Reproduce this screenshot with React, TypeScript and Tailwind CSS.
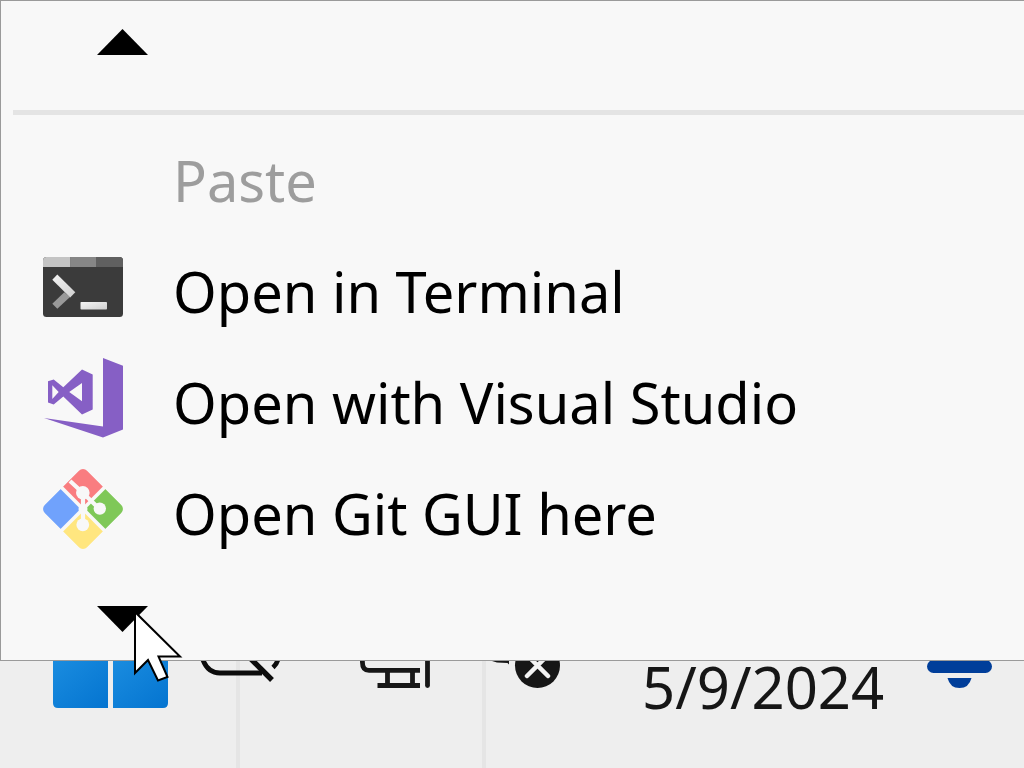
import React from "react";

interface MenuItem {
  label: string;
  icon?: React.ReactNode;
  disabled?: boolean;
}

const TerminalIcon = () => (
  <svg className="w-20 h-[60px]" viewBox="0 0 80 60" aria-hidden="true">
    <defs>
      <clipPath id="terminal-shape">
        <rect width="80" height="60" rx="3.5" />
      </clipPath>
      <linearGradient id="terminal-prompt" x1="0" y1="0" x2="1" y2="1">
        <stop offset="0" stopColor="#f4f4f4" />
        <stop offset="1" stopColor="#cfcfcf" />
      </linearGradient>
    </defs>
    <g clipPath="url(#terminal-shape)">
      <rect width="80" height="60" fill="#3b3b3b" />
      <rect width="27.5" height="10" fill="#c4c4c4" />
      <rect x="27.5" width="26" height="10" fill="#868686" />
      <rect x="53.5" width="26.5" height="10" fill="#606060" />
    </g>
    <path d="M21.3 35.3 27 40 14.3 51.7 9.3 46.7Z" fill="#999" />
    <path
      d="M9.3 22.8 14.3 17.6 32.3 35.2 27.2 40.4Z"
      fill="url(#terminal-prompt)"
    />
    <rect
      x="37.5"
      y="45"
      width="26.5"
      height="7.5"
      rx="0.8"
      fill="url(#terminal-prompt)"
    />
  </svg>
);

const VisualStudioIcon = () => (
  <svg className="w-20 h-20" viewBox="0 0 80 80" fill="#865fc5" aria-hidden="true">
    <path d="M60 0 80 7.8V71.4L60 79.6 1 60 60 68.4Z" />
    <path
      fillRule="evenodd"
      d="M5 23.2 10.7 21.6 20.3 29.2 39 11.6 49.7 16.4V51.6L39 56.4 20.3 38.6 10.7 46.4 5 44.4ZM9.3 27.3V41L15.7 34.1ZM39 25 26.2 34.1 39 43.2Z"
    />
  </svg>
);

const GitIcon = () => (
  <svg className="w-20 h-20" viewBox="0 0 80 80" aria-hidden="true">
    <defs>
      <clipPath id="git-shape">
        <rect x="10" y="10" width="60" height="60" rx="6" transform="rotate(45 40 40)" />
      </clipPath>
    </defs>
    <g clipPath="url(#git-shape)">
      <g transform="rotate(45 40 40)">
        <rect x="10" y="10" width="28.2" height="28.2" fill="#f97d80" />
        <rect x="41.8" y="10" width="28.2" height="28.2" fill="#7fc858" />
        <rect x="10" y="41.8" width="28.2" height="28.2" fill="#70a2fc" />
        <rect x="41.8" y="41.8" width="28.2" height="28.2" fill="#ffe67f" />
      </g>
    </g>
    <g stroke="#f8f8f8" strokeWidth="4.2" fill="none">
      <path d="M27 12 40 24 56 39.5" />
      <path d="M40 23V56" />
    </g>
    <g fill="#f8f8f8">
      <circle cx="39.8" cy="23.8" r="6.8" />
      <circle cx="56.8" cy="39.6" r="6.2" />
      <circle cx="39.8" cy="55.8" r="6.4" />
      <circle cx="40" cy="40" r="4.5" />
    </g>
  </svg>
);

const items: MenuItem[] = [
  { label: "Paste", disabled: true },
  { label: "Open in Terminal", icon: <TerminalIcon /> },
  { label: "Open with Visual Studio", icon: <VisualStudioIcon /> },
  { label: "Open Git GUI here", icon: <GitIcon /> },
];

const ContextMenu = () => (
  <div
    role="menu"
    className="relative shrink-0 border-t border-l border-b border-[#9a9a9a] bg-[#f8f8f8]"
  >
    <button type="button" aria-label="Scroll up" className="block w-full pt-7 pb-[54px] pl-24">
      <svg className="block w-[51px] h-[27px]" viewBox="0 0 51 27">
        <path d="M25.5 0 51 26H0Z" />
      </svg>
    </button>
    <div role="separator" className="ml-3 h-[5px] bg-[#e4e4e4]" />

    <div className="pt-[5px]">
      {items.map((item) => (
        <button
          key={item.label}
          type="button"
          role="menuitem"
          disabled={item.disabled}
          className="flex w-full h-[111px] items-center gap-[50px] pl-[42px] text-left text-[56px] leading-none text-black disabled:text-[#9d9d9d]"
        >
          <span className="flex w-20 shrink-0 justify-center">{item.icon}</span>
          <span className="pt-2 whitespace-nowrap">{item.label}</span>
        </button>
      ))}
    </div>

    <button type="button" aria-label="Scroll down" className="block w-full pt-[42px] pb-7 pl-24">
      <svg className="block w-[51px] h-[26px]" viewBox="0 0 51 26">
        <path d="M0 0H51L25.5 26Z" />
      </svg>
    </button>

    <svg
      className="pointer-events-none absolute left-[131px] top-[607px] z-10 w-[54px] h-[76px]"
      viewBox="0 0 54 76"
      aria-hidden="true"
    >
      <path
        d="M3 4V65L16 52 26 72.5 35.5 69 26.5 48.5H48Z"
        fill="#fff"
        stroke="#000"
        strokeWidth="2"
      />
    </svg>
  </div>
);

const Taskbar = () => (
  <div className="relative flex-1 bg-[#eeeeee]">
    <div className="absolute inset-0 flex">
      <div className="w-60 border-r-4 border-[#e5e5e5]" />
      <div className="w-[246px] border-r-4 border-[#e5e5e5]" />
    </div>

    <div className="relative flex items-start pl-[53px]">
      <button type="button" aria-label="Start">
        <svg className="block w-[115px] h-12" viewBox="0 0 115 48">
          <defs>
            <linearGradient id="start-pane" x1="0" y1="0" x2="1" y2="1">
              <stop offset="0" stopColor="#1a8cdf" />
              <stop offset="1" stopColor="#0474d0" />
            </linearGradient>
          </defs>
          <path d="M0 0H55V47H5Q0 47 0 42Z" fill="url(#start-pane)" />
          <path d="M60 0H115V42Q115 47 110 47H60Z" fill="url(#start-pane)" />
        </svg>
      </button>

      <button type="button" aria-label="Cloud sync off" className="ml-8">
        <svg
          className="block w-[82px] h-12"
          viewBox="0 0 82 48"
          fill="none"
          stroke="#0c0c0c"
          strokeWidth="4.8"
        >
          <path d="M3-1C6 7 12 12 20 12H62" />
          <path d="M51-2 72 19" strokeWidth="5.4" />
          <path d="M78-2Q77 3 73 6.5" />
        </svg>
      </button>

      <button type="button" aria-label="Network" className="ml-[78px]">
        <svg
          className="block w-[70px] h-12"
          viewBox="0 0 70 48"
          fill="none"
          stroke="#161616"
          strokeWidth="4.8"
        >
          <path d="M2.4-2V1Q2.4 9.3 9 9.3H60M27.5 10V24M52.5 10V24" />
          <path d="M60 24.5H17.5" />
          <path d="M67.5-2V24.6" strokeLinecap="round" />
        </svg>
      </button>

      <button type="button" aria-label="Volume muted" className="ml-[62px]">
        <svg className="block w-[68px] h-12" viewBox="0 0 68 48">
          <path d="M0 0H17V3.5L15.5 2 5 1.6Z" fill="#161616" />
          <circle cx="45.5" cy="4.5" r="22.5" fill="#161616" />
          <path
            d="M35 15 56-6M56 15 35-6"
            stroke="#f2f2f2"
            strokeWidth="4.5"
            strokeLinecap="round"
          />
        </svg>
      </button>

      <time
        dateTime="2024-05-09"
        className="ml-[82px] whitespace-nowrap text-[58px] leading-13 text-[#161616]"
      >
        5/9/2024
      </time>

      <button type="button" aria-label="Notifications" className="ml-auto mr-8">
        <svg className="block w-[65px] h-12" viewBox="0 0 65 48" fill="#003e9a">
          <rect y="-1" width="65" height="13" rx="6.5" />
          <path d="M20.5 17H44.5Q42 27 32.5 27T20.5 17Z" />
        </svg>
      </button>
    </div>
  </div>
);

export default function App() {
  return (
    <div className="flex min-h-screen flex-col font-['Noto_Sans','Open_Sans',sans-serif]">
      <ContextMenu />
      <Taskbar />
    </div>
  );
}
